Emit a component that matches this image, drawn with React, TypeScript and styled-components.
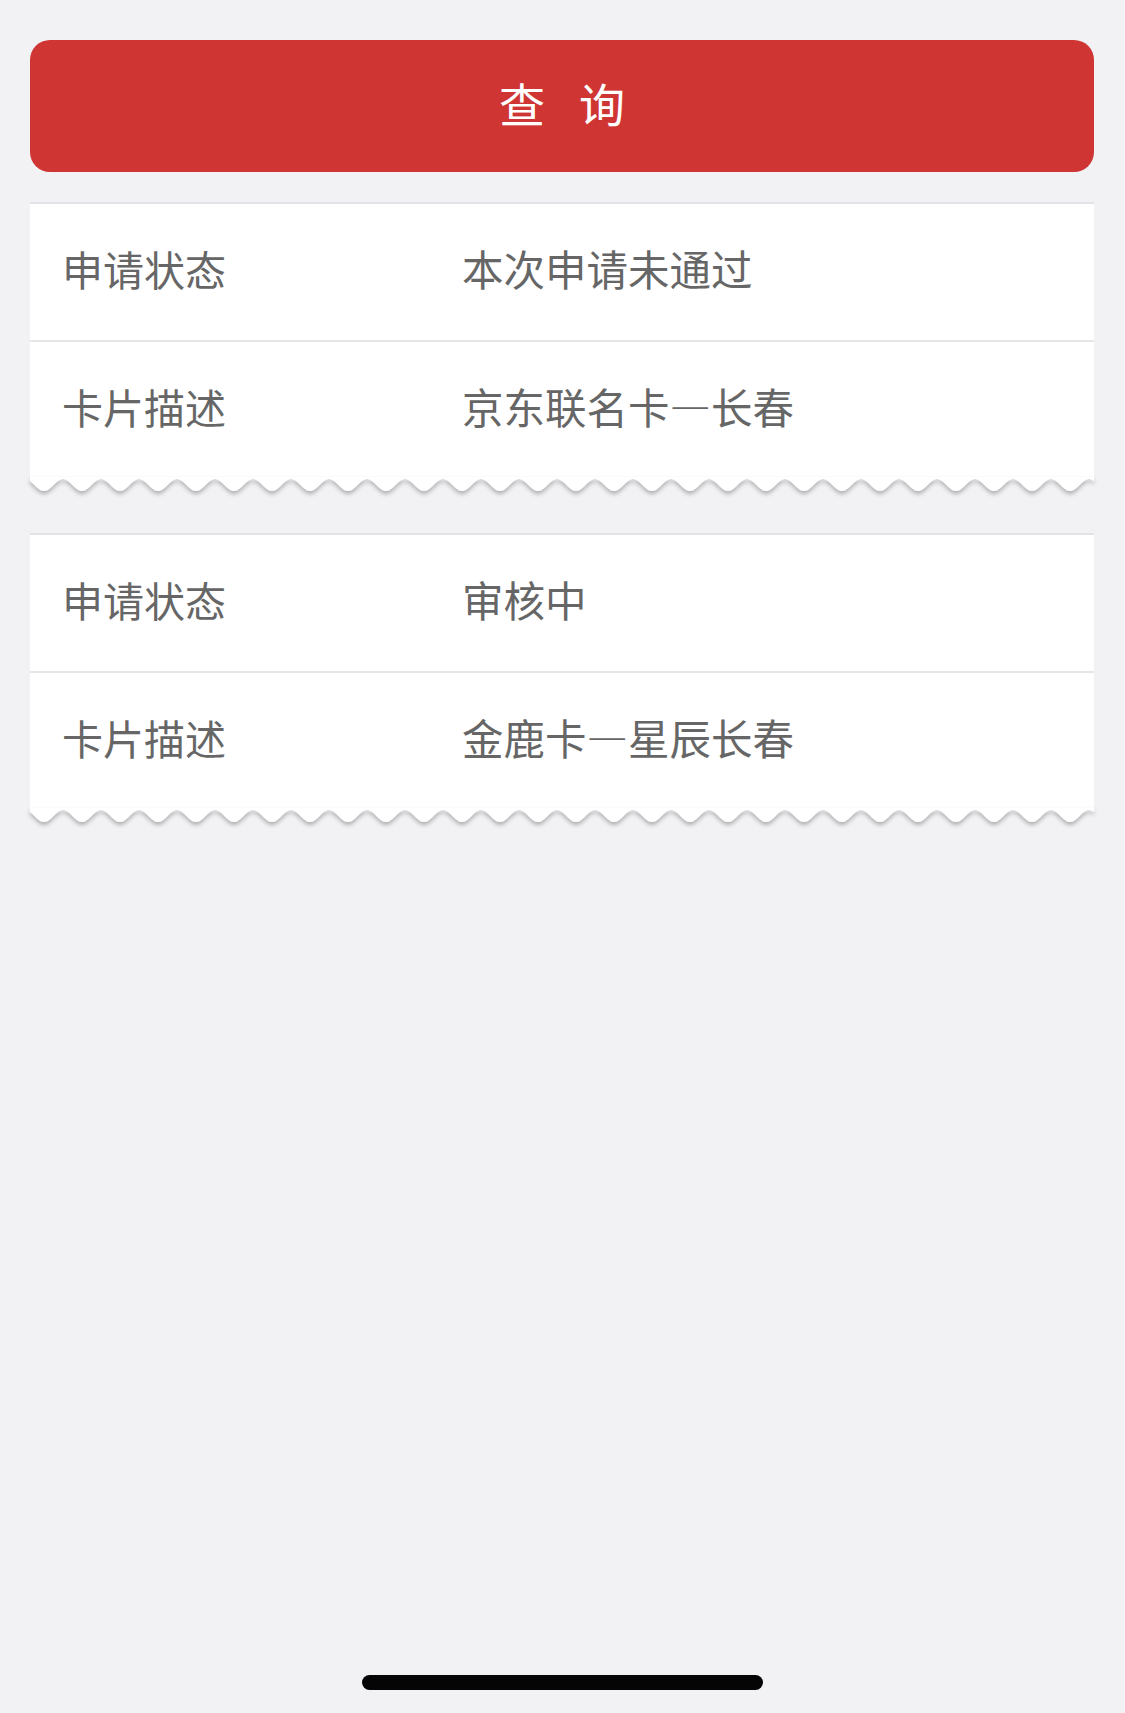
import React from "react";
import styled, { createGlobalStyle } from "styled-components";

type Item = {
    status: string,
    desc: string
}

const records: Item[] = [
    { status: "本次申请未通过", desc: "京东联名卡—长春" },
    { status: "审核中", desc: "金鹿卡—星辰长春" },
]

const GlobalStyle = createGlobalStyle`
    html, body {
        margin: 0;
        padding: 0;
        background: #f2f2f5;
    }
    body {
        font-family: "Noto Sans CJK SC", "Noto Sans", "Liberation Sans", sans-serif;
    }
`

const WAVE_W = 1064
const WAVE_PERIOD = 38

const wavePath = () => {
    let d = `M0,0 L${WAVE_W},0`
    for (let x = WAVE_W; x >= 0; x -= 2) {
        const y = 8 + 6 * Math.cos((2 * Math.PI * (x - 14)) / WAVE_PERIOD)
        d += ` L${x},${y.toFixed(2)}`
    }
    return d + " Z"
}

const WaveEdge = () => (
    <WaveSvg viewBox={`0 0 ${WAVE_W} 22`} preserveAspectRatio="none">
        <defs>
            <filter id="waveShadow" x="-2%" y="-50%" width="104%" height="200%">
                <feDropShadow dx="0" dy="3" stdDeviation="2" floodColor="#000" floodOpacity="0.28" />
            </filter>
        </defs>
        <path d={wavePath()} fill="#ffffff" filter="url(#waveShadow)" />
    </WaveSvg>
)

const App = () => {
    return (
        <Page>
            <GlobalStyle />
            <QueryButton>查询</QueryButton>
            {records.map((rec, i) => (
                <Card key={i}>
                    <Row>
                        <Label>申请状态</Label>
                        <Value>{rec.status}</Value>
                    </Row>
                    <Row>
                        <Label>卡片描述</Label>
                        <Value>{rec.desc}</Value>
                    </Row>
                    <WaveEdge />
                </Card>
            ))}
            <HomeIndicator />
        </Page>
    )
}

export default App;

const Page = styled.div`
    display: flex;
    flex-direction: column;
    min-height: 100vh;
    box-sizing: border-box;
    padding: 40px 31px 23px 30px;
`

const QueryButton = styled.button`
    height: 132px;
    border: none;
    border-radius: 20px;
    background: #cf3533;
    color: #ffffff;
    font-family: inherit;
    font-size: 46px;
    letter-spacing: 34px;
    padding: 0 0 9px 34px;
    margin-bottom: 30px;
    cursor: pointer;
`

const Card = styled.div`
    display: flex;
    flex-direction: column;
    border-top: 2px solid #e3e3e7;
    margin-bottom: 34px;
`

const Row = styled.div`
    display: grid;
    grid-template-columns: 400px 1fr;
    align-items: center;
    height: 136px;
    box-sizing: border-box;
    padding: 0 0 8px 32px;
    background: #ffffff;
    & + & {
        border-top: 2px solid #e6e6e8;
        height: 138px;
    }
`

const Label = styled.span`
    font-size: 41px;
    color: #666666;
`

const Value = styled.span`
    font-size: 41.5px;
    color: #666666;
    font-feature-settings: "fwid";
`

const WaveSvg = styled.svg`
    display: block;
    width: 100%;
    height: 22px;
    margin-top: -1px;
    overflow: visible;
`

const HomeIndicator = styled.div`
    margin: auto auto 0;
    width: 401px;
    height: 15px;
    border-radius: 8px;
    background: #050505;
`
